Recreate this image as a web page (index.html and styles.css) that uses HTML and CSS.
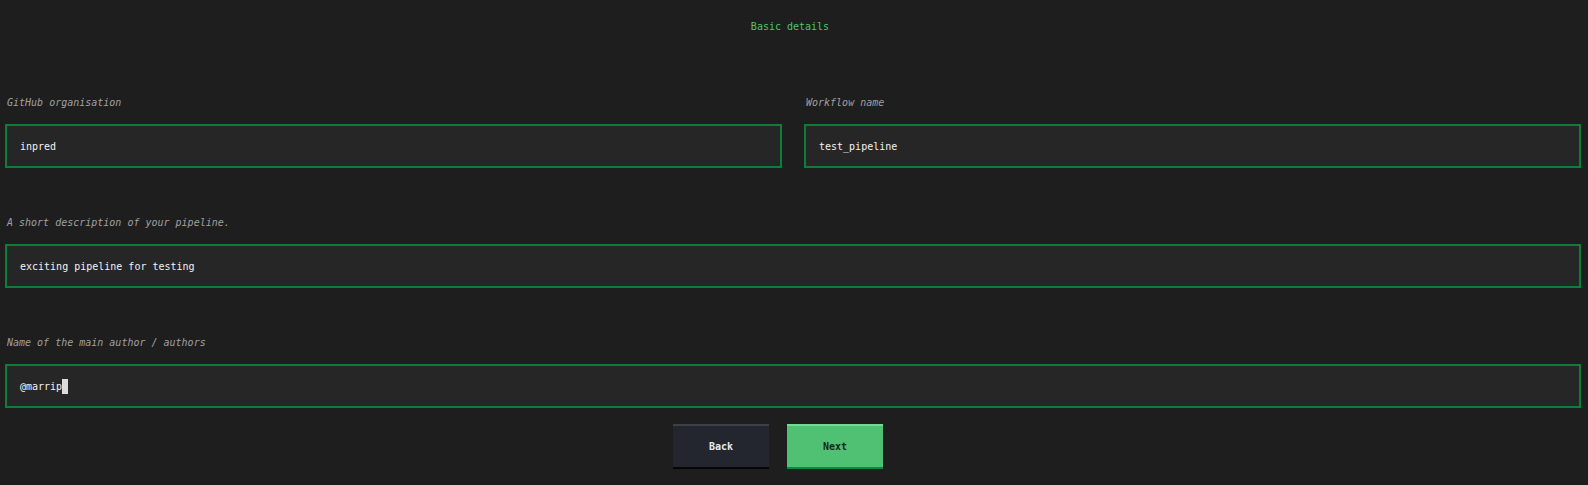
FILE: index.html
```html
<!DOCTYPE html>
<html>
<head>
<meta charset="utf-8">
<link rel="stylesheet" href="styles.css">
</head>
<body>
<div class="screen">
  <div class="title">Basic details</div>
  <div class="row two">
    <div class="field">
      <div class="label">GitHub organisation</div>
      <div class="input">inpred</div>
    </div>
    <div class="field">
      <div class="label">Workflow name</div>
      <div class="input">test_pipeline</div>
    </div>
  </div>
  <div class="row">
    <div class="field">
      <div class="label">A short description of your pipeline.</div>
      <div class="input">exciting pipeline for testing</div>
    </div>
  </div>
  <div class="row last">
    <div class="field">
      <div class="label">Name of the main author / authors</div>
      <div class="input">@marrip<span class="cursor"></span></div>
    </div>
  </div>
  <div class="buttons">
    <div class="btn back">Back</div>
    <div class="btn next">Next</div>
  </div>
</div>
</body>
</html>
```
FILE: styles.css
```css
html, body {
  margin: 0;
  padding: 0;
  background: #1e1e1e;
}
body {
  width: 1588px;
  height: 485px;
  overflow: hidden;
  font-family: "DejaVu Sans Mono", "Liberation Mono", monospace;
  font-size: 10px;
  color: #e6e6e6;
}
.screen {
  display: flex;
  flex-direction: column;
  padding: 0 7px 0 5px;
}
.title {
  text-align: center;
  color: #4ec46c;
  line-height: 14px;
  padding-top: 20px;
  padding-right: 6px;
  height: 14px;
  margin-bottom: 62px;
}
.row {
  display: flex;
  gap: 22px;
  margin-bottom: 48px;
}
.row.last {
  margin-bottom: 16px;
}
.field {
  flex: 1;
  display: flex;
  flex-direction: column;
}
.label {
  font-style: italic;
  color: #a0a0a0;
  line-height: 14px;
  height: 14px;
  padding-left: 2px;
  margin-bottom: 14px;
}
.input {
  height: 40px;
  border: 2px solid #0b7f37;
  background: #262626;
  display: flex;
  align-items: center;
  padding-left: 13px;
  color: #f2f2f2;
}
.cursor {
  display: inline-block;
  width: 6px;
  height: 15px;
  background: #dcdcdc;
}
.buttons {
  display: flex;
  gap: 18px;
  padding-left: 668px;
}
.btn {
  width: 96px;
  height: 41px;
  display: flex;
  align-items: center;
  justify-content: center;
  font-weight: bold;
}
.back {
  background: #23262e;
  border-top: 2px solid #3e4046;
  border-bottom: 2px solid #050505;
  color: #e4e8ee;
}
.next {
  background: #50c173;
  border-top: 2px solid #72dc8e;
  border-bottom: 2px solid #0a8a3c;
  color: #142a1a;
}
```
